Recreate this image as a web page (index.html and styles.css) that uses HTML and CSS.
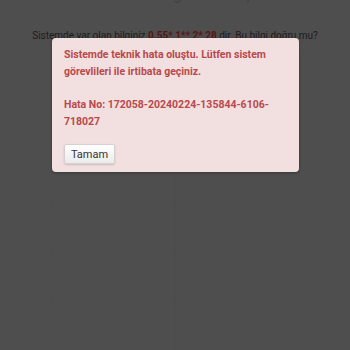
FILE: index.html
```html
<!DOCTYPE html>
<html lang="tr">
<head>
<meta charset="utf-8">
<link rel="stylesheet" href="styles.css">
</head>
<body>
<div class="page">
  <h2 class="title">Kimlik doğrulama ç</h2>
  <p class="question">Sistemde var olan bilginiz <b class="hint">0.55* 1** 2* 28</b> dir. Bu bilgi doğru mu?</p>
  <div class="grid">
    <div class="cell"></div><div class="cell"></div><div class="cell"></div><div class="cell"></div>
    <div class="cell"></div><div class="cell"></div><div class="cell"></div><div class="cell"></div>
    <div class="cell"></div><div class="cell"></div><div class="cell"></div><div class="cell"></div>
  </div>
</div>
<div class="dialog">
  <p class="msg">Sistemde teknik hata oluştu. Lütfen sistem görevlileri ile irtibata geçiniz.</p>
  <p class="msg">Hata No: 172058-20240224-135844-6106-718027</p>
  <button class="btn">Tamam</button>
</div>
</body>
</html>
```
FILE: styles.css
```css
html, body {
  margin: 0;
  padding: 0;
  background: #4e4e4e;
  width: 350px;
  height: 350px;
  overflow: hidden;
  font-family: Roboto, "Liberation Sans", sans-serif;
}
.page {
  display: flex;
  flex-direction: column;
  align-items: center;
  margin-top: -18px;
}
.title {
  margin: 0;
  font-size: 18px;
  font-weight: normal;
  color: #444;
  height: 22px;
}
.question {
  margin: 26px 0 0;
  font-size: 10px;
  color: #1c1c1c;
}
.hint {
  color: #561616;
}
.grid {
  margin-top: 8px;
  width: 248px;
  display: grid;
  grid-template-columns: repeat(2, 1fr);
  border-left: 1px solid #4c4c4c;
}
.cell {
  height: 50px;
  border-right: 1px solid #4c4c4c;
  border-bottom: 1px solid #4d4d4d;
}
.dialog {
  position: absolute;
  left: 52px;
  top: 38px;
  width: 223px;
  padding: 9px 12px 8px;
  background: #f2dfe0;
  border-radius: 4px;
  box-shadow: 0 1px 3px rgba(0,0,0,0.3);
}
.msg {
  margin: 0 0 17px;
  font-size: 10.5px;
  line-height: 16.5px;
  font-weight: bold;
  color: #b9494b;
}
.msg + .msg {
  margin-bottom: 14px;
}
.btn {
  display: block;
  width: 51px;
  height: 20px;
  padding: 0;
  font-family: inherit;
  font-size: 11px;
  color: #333;
  background: linear-gradient(#ffffff, #ebebeb);
  border: 1px solid #d8d0d0;
  border-radius: 2px;
  box-shadow: 0 1px 2px rgba(0,0,0,0.15);
}
```
